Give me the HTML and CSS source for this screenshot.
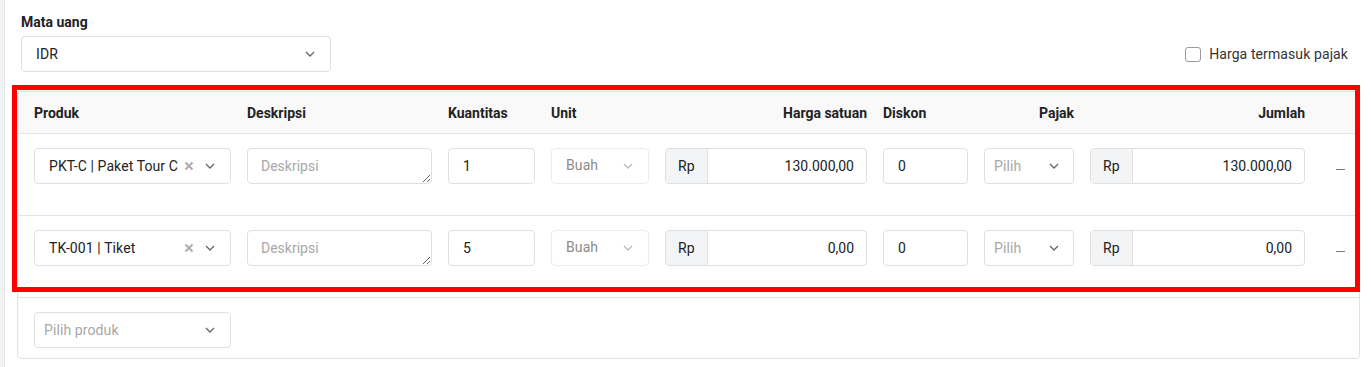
FILE: index.html
```html
<!DOCTYPE html>
<html lang="id">
<head>
<meta charset="utf-8">
<title>Produk</title>
<link rel="stylesheet" href="styles.css">
</head>
<body>
<div class="page">
  <div class="rail"></div>
  <main class="content">
    <div class="top">
      <div class="field">
        <div class="label">Mata uang</div>
        <div class="select currency">
          <span class="value">IDR</span>
          <svg class="chev" viewBox="0 0 10 6" width="10" height="6"><path d="M1 1l4 4 4-4" fill="none" stroke="#666" stroke-width="1.3"/></svg>
        </div>
      </div>
      <label class="check"><span class="box"></span><span>Harga termasuk pajak</span></label>
    </div>

    <div class="card">
      <div class="grid thead">
        <div>Produk</div>
        <div>Deskripsi</div>
        <div>Kuantitas</div>
        <div>Unit</div>
        <div class="r">Harga satuan</div>
        <div>Diskon</div>
        <div class="r">Pajak</div>
        <div class="r">Jumlah</div>
        <div></div>
      </div>

      <div class="grid row">
        <div class="select">
          <span class="value">PKT-C | Paket Tour C</span>
          <svg class="clear" viewBox="0 0 10 10" width="10" height="10"><path d="M1.5 1.5l7 7M8.5 1.5l-7 7" stroke="#b0b0b0" stroke-width="2.2"/></svg>
          <svg class="chev" viewBox="0 0 10 6" width="10" height="6"><path d="M1 1l4 4 4-4" fill="none" stroke="#666" stroke-width="1.3"/></svg>
        </div>
        <textarea class="area" placeholder="Deskripsi"></textarea>
        <input class="input" value="1">
        <div class="select disabled">
          <span class="value">Buah</span>
          <svg class="chev" viewBox="0 0 10 6" width="10" height="6"><path d="M1 1l4 4 4-4" fill="none" stroke="#bbb" stroke-width="1.3"/></svg>
        </div>
        <div class="group"><span class="addon">Rp</span><span class="num">130.000,00</span></div>
        <input class="input" value="0">
        <div class="select tax">
          <span class="value ph">Pilih</span>
          <svg class="chev" viewBox="0 0 10 6" width="10" height="6"><path d="M1 1l4 4 4-4" fill="none" stroke="#666" stroke-width="1.3"/></svg>
        </div>
        <div class="group"><span class="addon">Rp</span><span class="num">130.000,00</span></div>
        <div class="remove"><span class="dash"></span></div>
      </div>

      <div class="grid row">
        <div class="select">
          <span class="value">TK-001 | Tiket</span>
          <svg class="clear" viewBox="0 0 10 10" width="10" height="10"><path d="M1.5 1.5l7 7M8.5 1.5l-7 7" stroke="#b0b0b0" stroke-width="2.2"/></svg>
          <svg class="chev" viewBox="0 0 10 6" width="10" height="6"><path d="M1 1l4 4 4-4" fill="none" stroke="#666" stroke-width="1.3"/></svg>
        </div>
        <textarea class="area" placeholder="Deskripsi"></textarea>
        <input class="input" value="5">
        <div class="select disabled">
          <span class="value">Buah</span>
          <svg class="chev" viewBox="0 0 10 6" width="10" height="6"><path d="M1 1l4 4 4-4" fill="none" stroke="#bbb" stroke-width="1.3"/></svg>
        </div>
        <div class="group"><span class="addon">Rp</span><span class="num">0,00</span></div>
        <input class="input" value="0">
        <div class="select tax">
          <span class="value ph">Pilih</span>
          <svg class="chev" viewBox="0 0 10 6" width="10" height="6"><path d="M1 1l4 4 4-4" fill="none" stroke="#666" stroke-width="1.3"/></svg>
        </div>
        <div class="group"><span class="addon">Rp</span><span class="num">0,00</span></div>
        <div class="remove"><span class="dash"></span></div>
      </div>

      <div class="foot">
        <div class="select pick">
          <span class="value ph">Pilih produk</span>
          <svg class="chev" viewBox="0 0 10 6" width="10" height="6"><path d="M1 1l4 4 4-4" fill="none" stroke="#666" stroke-width="1.3"/></svg>
        </div>
      </div>
    </div>
  </main>
  <div class="highlight"></div>
</div>
</body>
</html>
```

FILE: styles.css
```css
* { box-sizing: border-box; }
html, body { margin: 0; padding: 0; background: #fff; }
body {
  font-family: Roboto, "Liberation Sans", Arial, sans-serif;
  font-size: 14px;
  color: #222;
  line-height: 20px;
}
.page {
  position: relative;
  display: flex;
  min-height: 367px;
}
.rail {
  width: 5px;
  flex: none;
  background: #f2f3f5;
  border-right: 1px solid #e3e5e8;
}
.content {
  flex: 1;
  min-width: 0;
  padding: 12px 11px 0 12px;
}
.top {
  display: flex;
  justify-content: space-between;
  align-items: flex-end;
  padding-left: 4px;
  padding-right: 12px;
}
.label {
  font-weight: 700;
  margin-bottom: 4px;
}
.check {
  display: flex;
  align-items: center;
  height: 36px;
  gap: 8px;
  color: #333;
  letter-spacing: 0.1px;
}
.box {
  width: 16px;
  height: 15px;
  border: 1px solid #9a9a9a;
  border-radius: 3px;
  background: #fff;
}
.select {
  display: flex;
  align-items: center;
  height: 36px;
  border: 1px solid #e0e0e0;
  border-radius: 4px;
  padding: 0 15px 0 14px;
  background: #fff;
}
.select .value {
  flex: 1;
  white-space: nowrap;
  overflow: hidden;
  letter-spacing: 0.1px;
}
.select .ph { color: #a8a8a8; }
.select .clear { margin: 0 11px 0 4px; flex: none; }
.select .chev { flex: none; }
.currency { width: 310px; }
.disabled { border-color: #ececec; }
.disabled .value { color: #8c8c8c; margin-top: -2px; }
.tax { padding: 0 14px 0 9px; }

.card {
  margin: 19px 0 0 0;
  border: 1px solid #e2e2e2;
  border-radius: 4px;
}
.grid {
  display: grid;
  grid-template-columns: 197px 185px 87px 98px 202px 85px 90px 215px 1fr;
  column-gap: 16px;
  padding: 0 0 0 16px;
}
.thead {
  height: 42px;
  align-items: center;
  background: #f9f9f9;
  border-bottom: 1px solid #e4e4e4;
  font-weight: 700;
  color: #222;
  border-radius: 4px 4px 0 0;
}
.thead .r { text-align: right; }
.row {
  padding-top: 14px;
  padding-bottom: 31px;
  border-bottom: 1px solid #e4e4e4;
  align-items: start;
}
.area {
  display: block;
  width: 100%;
  height: 36px;
  margin: 0;
  border: 1px solid #e0e0e0;
  border-radius: 4px;
  padding: 7px 13px;
  font: inherit;
  line-height: 20px;
  color: #222;
  resize: vertical;
  outline: none;
}
.area::placeholder { color: #a8a8a8; }
.input {
  display: block;
  width: 100%;
  height: 36px;
  margin: 0;
  border: 1px solid #e0e0e0;
  border-radius: 4px;
  padding: 0 14px;
  font: inherit;
  color: #222;
  outline: none;
}
.group {
  display: flex;
  height: 36px;
  border: 1px solid #e0e0e0;
  border-radius: 4px;
  overflow: hidden;
}
.addon {
  width: 42px;
  flex: none;
  display: flex;
  align-items: center;
  padding-left: 12px;
  background: #f3f4f6;
  border-right: 1px solid #e0e0e0;
}
.num {
  flex: 1;
  display: flex;
  align-items: center;
  justify-content: flex-end;
  padding-right: 12px;
}
.remove {
  height: 36px;
  display: flex;
  align-items: center;
  justify-content: center;
  padding-top: 6px;
}
.dash {
  width: 9px;
  height: 1px;
  background: #7a7a7a;
}
.foot {
  padding: 14px 16px 10px;
}
.pick { width: 197px; padding-left: 9px; }

.highlight {
  position: absolute;
  left: 12px;
  top: 85px;
  width: 1348px;
  height: 207px;
  border: 5px solid #ff0000;
  pointer-events: none;
}
```
